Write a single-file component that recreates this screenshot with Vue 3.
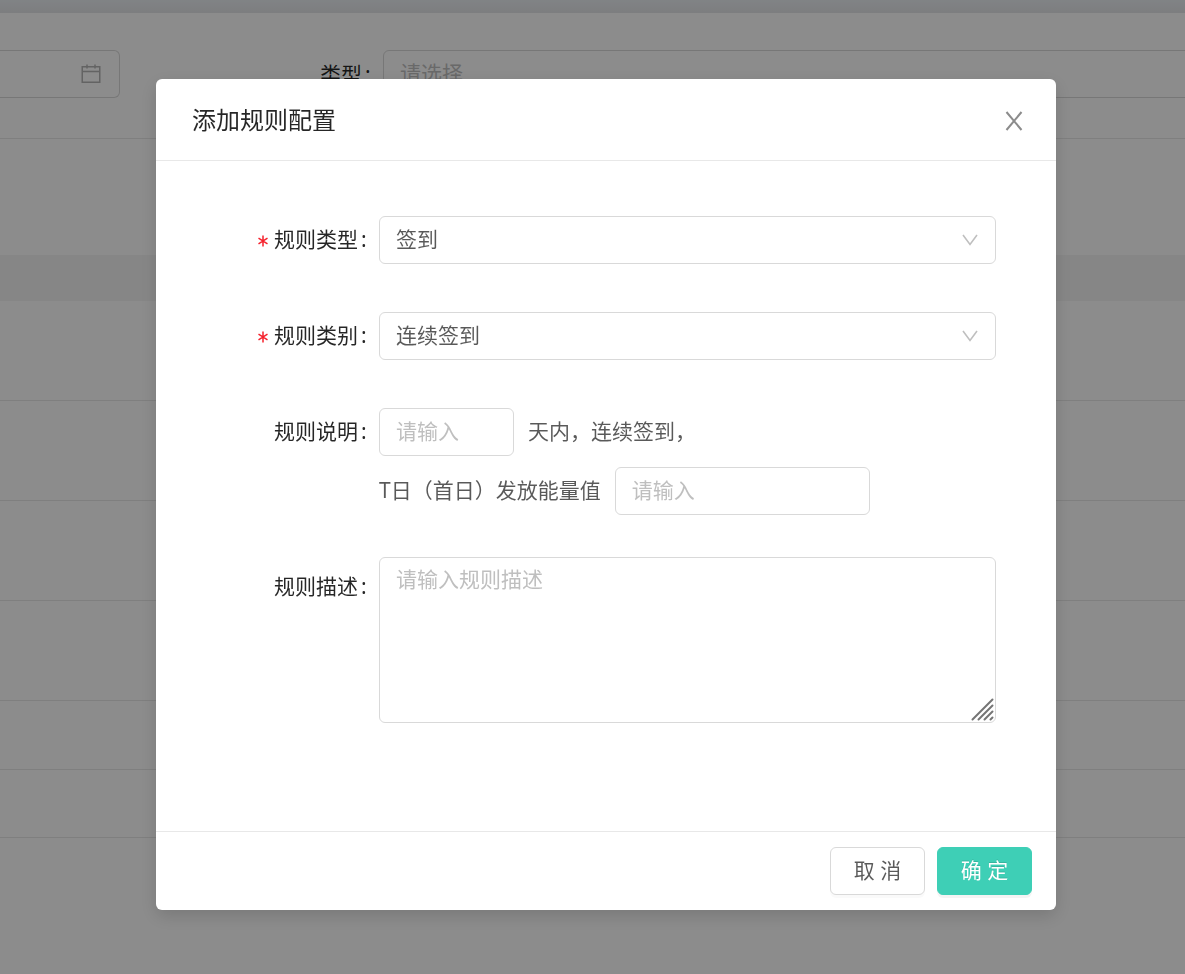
<script setup>
import { ref } from 'vue'

const ruleType = ref('签到')
const ruleCategory = ref('连续签到')
const days = ref('')
const energy = ref('')
const description = ref('')
const rows = ['tall', 'tall', 'tall', 'tall', 'medium', 'short']
</script>

<template>
  <div class="page">
    <div class="topbar"></div>
    <div class="filters">
      <div class="date-box">
        <input class="control" type="text" aria-label="日期" />
        <svg class="calendar" viewBox="0 0 20 20" aria-hidden="true">
          <path d="M1.25 2.75h17.5v15.5H1.25zM1.25 7.5h17.5M6 .5v4M14 .5v4" />
        </svg>
      </div>
      <label class="filter-label" for="kind">类型<span class="colon">:</span></label>
      <select id="kind" class="control kind">
        <option>请选择</option>
      </select>
    </div>
    <table class="grid">
      <thead>
        <tr><th></th></tr>
      </thead>
      <tbody>
        <tr v-for="(size, i) in rows" :key="i" :class="size"><td></td></tr>
      </tbody>
    </table>
  </div>

  <div class="mask">
    <section class="modal" role="dialog" aria-modal="true" aria-labelledby="title">
      <header class="head">
        <h1 id="title">添加规则配置</h1>
        <button class="close" type="button" aria-label="关闭">
          <svg viewBox="0 0 18 20" aria-hidden="true"><path d="M1.5 1l15 18M16.5 1l-15 18" /></svg>
        </button>
      </header>

      <form class="body" @submit.prevent>
        <div class="row">
          <label class="label" for="type">
            <svg class="star" viewBox="0 0 10 12" aria-hidden="true"><path d="M5 .5v11M.5 3.2l9 5.6M9.5 3.2l-9 5.6" /></svg>规则类型<span class="colon">:</span>
          </label>
          <div class="field">
            <select id="type" v-model="ruleType" class="control">
              <option>签到</option>
            </select>
            <svg class="arrow" viewBox="0 0 16 12" aria-hidden="true"><path d="M1 1l7 9.5L15 1" /></svg>
          </div>
        </div>

        <div class="row">
          <label class="label" for="category">
            <svg class="star" viewBox="0 0 10 12" aria-hidden="true"><path d="M5 .5v11M.5 3.2l9 5.6M9.5 3.2l-9 5.6" /></svg>规则类别<span class="colon">:</span>
          </label>
          <div class="field">
            <select id="category" v-model="ruleCategory" class="control">
              <option>连续签到</option>
            </select>
            <svg class="arrow" viewBox="0 0 16 12" aria-hidden="true"><path d="M1 1l7 9.5L15 1" /></svg>
          </div>
        </div>

        <div class="row explain">
          <label class="label" for="days">规则说明<span class="colon">:</span></label>
          <div class="lines">
            <div class="line">
              <input id="days" v-model="days" class="control days" type="text" placeholder="请输入" />
              <span>天内，连续签到，</span>
            </div>
            <div class="line">
              <label for="energy">T日（首日）发放能量值</label>
              <input id="energy" v-model="energy" class="control energy" type="text" placeholder="请输入" />
            </div>
          </div>
        </div>

        <div class="row">
          <label class="label area-label" for="desc">规则描述<span class="colon">:</span></label>
          <div class="field">
            <textarea id="desc" v-model="description" class="control area" placeholder="请输入规则描述"></textarea>
            <svg class="grip" viewBox="0 0 24 24" aria-hidden="true">
              <path d="M1.5 21.5l20-20M7.5 21.5l14-14M13.5 21.5l8-8M19.5 21.5l2-2" />
            </svg>
          </div>
        </div>
      </form>

      <footer class="foot">
        <button class="btn" type="button">取 消</button>
        <button class="btn primary" type="button">确 定</button>
      </footer>
    </section>
  </div>
</template>

<style>
body {
  background: #fff;
  font-family: "Noto Sans", "Noto Sans CJK SC", sans-serif;
}
</style>

<style scoped>
.page,
.mask {
  font-size: 21px;
  line-height: 32px;
  color: rgba(0, 0, 0, 0.65);
}
.page,
.page *,
.mask,
.mask * {
  box-sizing: border-box;
}
.page {
  overflow: hidden;
}
svg {
  fill: none;
  stroke: currentColor;
}
.topbar {
  height: 13px;
  background: linear-gradient(#ebeff3, #e3e5e8);
}
.filters {
  display: flex;
  align-items: center;
  height: 126px;
  padding-bottom: 4px;
  border-bottom: 1px solid #e8e8e8;
}
.date-box {
  position: relative;
  width: 120px;
}
.date-box .control {
  border-left: 0;
  border-radius: 0 6px 6px 0;
}
.calendar {
  position: absolute;
  top: 14px;
  right: 19px;
  width: 20px;
  height: 20px;
  color: #b4b4b4;
  stroke-width: 1.5;
}
.filter-label {
  width: 263px;
  text-align: right;
  color: rgba(0, 0, 0, 0.85);
}
.colon {
  display: inline-block;
  width: 9px;
  margin: 0 9px 0 3px;
  text-align: left;
}
.control {
  display: block;
  width: 100%;
  height: 48px;
  margin: 0;
  padding: 0 16px 2px;
  font: inherit;
  color: rgba(0, 0, 0, 0.65);
  background: #fff;
  border: 1px solid #d9d9d9;
  border-radius: 6px;
  outline: none;
  appearance: none;
}
.control::placeholder {
  color: #bfbfbf;
  opacity: 1;
}
.filters .kind {
  flex: 1;
  margin-right: -24px;
  color: #bfbfbf;
}
.grid {
  width: 100%;
  margin-top: 116px;
  border-collapse: separate;
  border-spacing: 0;
}
.grid th,
.grid td {
  padding: 0;
}
.grid th {
  height: 46px;
  background: #f5f5f5;
}
.grid td {
  border-bottom: 1px solid #e8e8e8;
}
.tall td {
  height: 100px;
}
.medium td {
  height: 69px;
}
.short td {
  height: 68px;
}
.mask {
  position: fixed;
  inset: 0;
  display: flex;
  justify-content: center;
  align-items: flex-start;
  padding: 79px 0 64px 27px;
  overflow: auto;
  background: rgba(0, 0, 0, 0.45);
}
.modal {
  width: 900px;
  max-width: 100%;
  background: #fff;
  border-radius: 6px;
  box-shadow: 0 6px 18px rgba(0, 0, 0, 0.15);
}
.head {
  display: flex;
  justify-content: space-between;
  align-items: center;
  height: 82px;
  padding: 0 33px 0 36px;
  border-bottom: 1px solid #e8e8e8;
}
h1 {
  margin: 0;
  font-size: 24px;
  font-weight: 400;
  line-height: 36px;
  color: rgba(0, 0, 0, 0.85);
}
button {
  font: inherit;
  cursor: pointer;
}
.close {
  display: flex;
  padding: 2px 0 0;
  color: #8c8c8c;
  background: none;
  border: 0;
}
.close svg {
  width: 18px;
  height: 20px;
  stroke-width: 2;
}
.body {
  display: grid;
  gap: 48px;
  padding: 55px 60px 108px 0;
}
.row {
  display: grid;
  grid-template-columns: 223px 1fr;
}
.explain {
  margin-bottom: -6px;
}
.label {
  height: 48px;
  line-height: 46px;
  text-align: right;
  white-space: nowrap;
  color: rgba(0, 0, 0, 0.85);
}
.area-label {
  margin-top: 6px;
}
.star {
  width: 10px;
  height: 12px;
  margin-right: 6px;
  color: #f5222d;
  stroke-width: 1.5;
}
.field {
  position: relative;
}
.arrow {
  position: absolute;
  top: 18px;
  right: 18px;
  width: 16px;
  height: 12px;
  color: #bfbfbf;
  stroke-width: 1.6;
  pointer-events: none;
}
.lines {
  display: grid;
  gap: 11px;
}
.line {
  display: flex;
  align-items: center;
  gap: 14px;
  white-space: nowrap;
}
.line span,
.line label {
  padding-bottom: 2px;
}
.days {
  width: 135px;
}
.energy {
  width: 255px;
}
.area {
  height: 166px;
  padding: 5px 16px;
  resize: none;
}
.grip {
  position: absolute;
  right: 1px;
  bottom: 1px;
  width: 24px;
  height: 24px;
  color: #757575;
  stroke-width: 2;
  stroke-linecap: round;
  pointer-events: none;
}
.foot {
  display: flex;
  justify-content: flex-end;
  gap: 12px;
  padding: 15px 24px;
  border-top: 1px solid #e8e8e8;
}
.btn {
  width: 95px;
  height: 48px;
  padding: 0 0 2px;
  color: rgba(0, 0, 0, 0.65);
  background: #fff;
  border: 1px solid #d9d9d9;
  border-radius: 6px;
  box-shadow: 0 3px 0 rgba(0, 0, 0, 0.02);
}
.primary {
  color: #fff;
  background: #3ecfb6;
  border-color: #3ecfb6;
  box-shadow: 0 3px 0 rgba(0, 0, 0, 0.045);
  text-shadow: 0 -1px 0 rgba(0, 0, 0, 0.12);
}
</style>
